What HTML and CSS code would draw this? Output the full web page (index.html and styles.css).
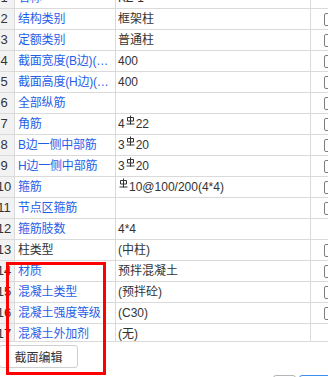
FILE: index.html
```html
<!DOCTYPE html>
<html>
<head>
<meta charset="utf-8">
<title>属性编辑</title>
<link rel="stylesheet" href="styles.css">
</head>
<body>
<div class="sheet">
<div class="grid">
<div class="no">1</div><div class="name">名称</div><div class="val">KZ-1</div><div class="chk"></div>
<div class="no">2</div><div class="name">结构类别</div><div class="val">框架柱</div><div class="chk"><span class="cb"></span></div>
<div class="no">3</div><div class="name">定额类别</div><div class="val">普通柱</div><div class="chk"><span class="cb"></span></div>
<div class="no">4</div><div class="name">截面宽度(B边)(mm)</div><div class="val">400</div><div class="chk"><span class="cb"></span></div>
<div class="no">5</div><div class="name">截面高度(H边)(mm)</div><div class="val">400</div><div class="chk"><span class="cb"></span></div>
<div class="no">6</div><div class="name">全部纵筋</div><div class="val"></div><div class="chk"><span class="cb"></span></div>
<div class="no">7</div><div class="name">角筋</div><div class="val">4<svg class="bar" viewBox="0 0 9 10"><path d="M4.5 0.5V9.5M1.5 2.5h6v3.5h-6zM0.5 9h8"/></svg>22</div><div class="chk"><span class="cb"></span></div>
<div class="no">8</div><div class="name">B边一侧中部筋</div><div class="val">3<svg class="bar" viewBox="0 0 9 10"><path d="M4.5 0.5V9.5M1.5 2.5h6v3.5h-6zM0.5 9h8"/></svg>20</div><div class="chk"><span class="cb"></span></div>
<div class="no">9</div><div class="name">H边一侧中部筋</div><div class="val">3<svg class="bar" viewBox="0 0 9 10"><path d="M4.5 0.5V9.5M1.5 2.5h6v3.5h-6zM0.5 9h8"/></svg>20</div><div class="chk"><span class="cb"></span></div>
<div class="no">10</div><div class="name">箍筋</div><div class="val"><svg class="bar" viewBox="0 0 9 10"><path d="M4.5 0.5V9.5M1.5 2.5h6v3.5h-6zM0.5 9h8"/></svg>10@100/200(4*4)</div><div class="chk"><span class="cb"></span></div>
<div class="no">11</div><div class="name">节点区箍筋</div><div class="val"></div><div class="chk"><span class="cb"></span></div>
<div class="no">12</div><div class="name">箍筋肢数</div><div class="val">4*4</div><div class="chk"></div>
<div class="no">13</div><div class="name plain">柱类型</div><div class="val">(中柱)</div><div class="chk"><span class="cb"></span></div>
<div class="no">14</div><div class="name">材质</div><div class="val">预拌混凝土</div><div class="chk"><span class="cb"></span></div>
<div class="no">15</div><div class="name">混凝土类型</div><div class="val">(预拌砼)</div><div class="chk"><span class="cb"></span></div>
<div class="no">16</div><div class="name">混凝土强度等级</div><div class="val">(C30)</div><div class="chk"><span class="cb"></span></div>
<div class="no">17</div><div class="name">混凝土外加剂</div><div class="val">(无)</div><div class="chk"></div>
</div>
</div>
<div class="tools">
<button class="btn">截面编辑</button>
</div>
<div class="footer">
<button class="btn small"></button>
<button class="btn primary"></button>
</div>
<div class="mark"></div>
</body>
</html>
```

FILE: styles.css
```css
body{
	margin: 0;
	width: 328px;
	height: 377px;
	overflow: hidden;
	position: relative;
	background: #fff;
	font-family: "Liberation Sans", "Noto Sans CJK SC", sans-serif;
	font-size: 12px;
	color: #333;
}
.sheet{
	height: 341px;
	overflow: hidden;
	border-bottom: 1px solid #dadada;
}
.grid{
	display: grid;
	grid-template-columns: 20px 100px 194px 40px;
	grid-auto-rows: 20px;
	gap: 1px;
	background: #dadada;
	margin: -12px 0 0 -6px;
	width: max-content;
}
.grid > div{
	background: #fff;
	line-height: 20px;
	white-space: nowrap;
	overflow: hidden;
}
.grid > .no{
	background: #f2f2f2;
	text-align: center;
	font-size: 13px;
	color: #333;
}
.name{
	padding-left: 3px;
	color: #1f5fe8;
	letter-spacing: -0.2px;
	text-overflow: ellipsis;
}
.name.plain{
	color: #333;
}
.val{
	padding-left: 2px;
}
.bar{
	width: 9px;
	height: 10px;
	vertical-align: 3px;
	margin: 0 1px;
	fill: none;
	stroke: #333;
	stroke-width: 1;
}
.cb{
	display: block;
	width: 11px;
	height: 11px;
	margin: 4px 0 0 13px;
	border: 1px solid #7d7d7d;
	border-radius: 2px;
}
.tools{
	padding-top: 3px;
	height: 23px;
}
.btn{
	height: 23px;
	margin-left: -1px;
	width: 79px;
	padding: 0;
	background: #fff;
	border: 1px solid #cfcfcf;
	border-radius: 3px;
	font-family: inherit;
	font-size: 12px;
	color: #333;
}
.footer{
	display: flex;
	justify-content: flex-end;
	gap: 4px;
	margin-top: 7px;
	margin-right: -10px;
}
.footer .small{
	width: 23px;
	border-color: #b5b5b5;
}
.footer .primary{
	width: 39px;
	border-color: #3d8ef0;
}
.mark{
	position: absolute;
	left: 6px;
	top: 262px;
	width: 100px;
	height: 113px;
	box-sizing: border-box;
	border: 3px solid #f00;
}
```
